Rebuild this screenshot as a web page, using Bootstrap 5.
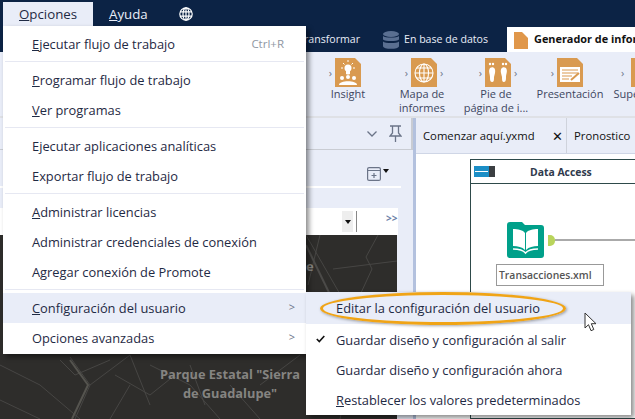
<!DOCTYPE html>
<html lang="es">
<head>
  <meta charset="UTF-8">
  <meta name="viewport" content="width=device-width, initial-scale=1.0">
  <title>Opciones - Configuración del usuario</title>
  <link href="https://cdn.jsdelivr.net/npm/bootstrap@5.3.0/dist/css/bootstrap.min.css" rel="stylesheet">
  <style>
    html, body { margin: 0; height: 100%; }
    body {
      width: 635px; height: 419px; overflow: hidden; position: relative;
      font-family: "Open Sans", "Liberation Sans", sans-serif;
      font-size: 13px; color: #1f2a44; background: #e9edf8;
    }
    .top-bar { height: 26px; background: #0c2345; padding: 2px 0 0 3px; color: #e9edf8; }
    .top-tab { width: 90px; padding-left: 16px; line-height: 24px; font-size: 13.3px; }
    .top-tab.on { background: #e9edf8; color: #1f2a44; }
    .top-tab.help { width: 86px; }
    .tab-bar { height: 26px; background: #0c2345; color: #e9edf8; font-size: 10.6px; }
    .tab-item { gap: 5px; padding-top: 2px; }
    .tab-first { width: 360px; justify-content: flex-end; }
    .tab-db { margin-left: 23px; width: 124px; }
    .tab-active { background: #fff; color: #111; font-size: 10.9px; font-weight: 700; flex: 1; margin-top: 1px; padding-left: 7px; gap: 6px; white-space: nowrap; overflow: hidden; }
    .tab-active svg { flex: none; }
    .ribbon { height: 66px; padding-left: 311px; border-bottom: 2px solid #dfe1e6; background: #e9edf8; overflow: hidden; }
    .rb-item { width: 74px; flex: none; text-align: center; font-size: 11px; line-height: 14px; color: #3d4660; padding-top: 6px; }
    .rb-item.last { margin-left: 6px; white-space: nowrap; }
    .rb-icon { height: 29px; gap: 3px; color: #6b7488; font-size: 11px; }
    .rb-icon.wide { padding-left: 4px; }
    .ghost { visibility: hidden; }
    .work { height: 301px; }
    .side { width: 413px; flex: none; border-right: 0; }
    .side-head { height: 32px; padding-right: 9px; gap: 12px; border-right: 2px solid #c9ccd3; border-bottom: 1px solid #c9ccd3; }
    .side-tools { height: 38px; padding: 0 12px 5px 0; margin-right: 12px; border-bottom: 2px solid #fff; gap: 2px; }
    .side-box { margin-top: 20px; margin-right: 15px; background: #fff; height: 27px; }
    .side-box-inner { padding-left: 342px; gap: 3px; height: 27px; }
    .caret-box { width: 11px; height: 21px; background: #eee; }
    .caret-dn { width: 0; height: 0; border: 3px solid transparent; border-top: 4px solid #111; border-bottom: 0; }
    .v-line { width: 1px; height: 21px; background: #888; }
    .chev { margin-left: 26px; color: #6b7fa8; font-size: 10px; font-weight: 700; line-height: 1; margin-top: -8px; }
    .map-area { height: 184px; margin-right: 16px; background: #2e2d2b; overflow: hidden; position: relative; }
    .map-lines { display: block; }
    .map-label {
      position: absolute; left: 140px; top: 130px; width: 180px; text-align: center;
      color: #858481; font-size: 12.8px; font-weight: 700; line-height: 19px;
    }
    .map-frag { position: absolute; left: 306px; top: 22px; color: #858481; font-size: 13px; font-weight: 700; }
    .split { width: 3px; background: #b3c1de; flex: none; }
    .canvas { min-width: 0; overflow: hidden; background: #fff; }
    .doc-tabs { height: 36px; border-bottom: 1px solid #cfd6e6; background: #e9edf8; font-size: 11.3px; color: #111; white-space: nowrap; }
    .doc-tab { width: 151px; flex: none; padding: 2px 0 0 7px; border-right: 1px solid #cfd3dc; height: 100%; }
    .doc-next { padding: 2px 0 0 7px; }
    .x-mark { font-size: 13px; line-height: 1; margin-right: 3px; }
    .group-box { margin: 5px 0 0 54px; width: 200px; border: 1px solid #2e4a4a; border-right: 0; height: 260px; }
    .group-head { height: 24px; border-bottom: 1px solid #2e4a4a; font-size: 10.4px; font-weight: 700; color: #2f3a4c; padding: 0 0 0 3px; }
    .group-title { padding-top: 3px; }
    .group-tag { width: 21px; height: 11px; background: #1b8ec6; border-right: 6px solid #3b3f42; margin-right: 35px; position: relative; }
    .group-tag::after { content: ""; position: absolute; left: 1px; right: 1px; top: 5px; height: 1px; background: #fff; }
    .tool-row { margin: 38px 0 0 36px; }
    .anchor { width: 7px; height: 11px; background: #b9d45c; border-radius: 0 5px 5px 0; margin-left: 4px; }
    .wire { flex: 1; height: 2px; background: #aaa; }
    .tool-label { margin: 6px 0 0 25px; width: 108px; height: 22px; border: 1px solid #999; padding-left: 2px; font-size: 10.4px; font-weight: 600; color: #555; line-height: 20px; }

    .menu-main, .menu-sub {
      border: 0; border-radius: 0; padding: 0; margin: 0; font-size: 12.85px; color: #1f2a44;
      box-shadow: 3px 3px 5px rgba(0,0,0,.45);
    }
    .menu-main { left: 3px; top: 26px; width: 303px; padding: 3px 0 1px; z-index: 5; }
    .menu-sub { left: 306px; top: 292px; width: 325px; z-index: 6; padding-bottom: 0; }
    .menu-main .dropdown-item, .menu-sub .dropdown-item {
      height: 30px; padding: 0 11px 0 29px; color: #1f2a44; line-height: 30px;
      display: flex; justify-content: space-between; align-items: center;
    }
    .menu-sub .dropdown-item { position: relative; padding-left: 30px; }
    .menu-main .dropdown-item.on, .menu-sub .dropdown-item.on { background: #e9edf8; }
    .menu-sub .dropdown-item.on { height: 32px; margin-bottom: 1px; }
    .menu-main .dropdown-divider { margin: 2px 2px 3px; border-top: 1px solid #e6e8f2; opacity: 1; }
    .keys { color: #9097a3; font-size: 11.5px; margin-right: 11px; }
    .more { color: #6b7488; font-size: 11px; margin-top: -2px; }
    .tick { position: absolute; left: 10px; top: 10px; }
    .oval {
      position: absolute; left: 320px; top: 292px; width: 246px; height: 33px;
      border: 3px solid #f0a416; border-radius: 50%; z-index: 7;
      box-shadow: 1px 1px 3px rgba(0,0,0,.35); pointer-events: none;
    }
    .pointer { position: absolute; left: 584px; top: 312px; z-index: 8; }
  </style>
</head>
<body>
  <div class="top-bar d-flex">
    <div class="top-tab on"><u>O</u>pciones</div>
    <div class="top-tab help"><u>A</u>yuda</div>
    <div class="d-flex align-items-center">
      <svg width="14" height="14" viewBox="0 0 14 14" fill="none" stroke="#fff" stroke-width="1.2"><circle cx="7" cy="7" r="6.2"/><ellipse cx="7" cy="7" rx="3" ry="6.2"/><path d="M1 4.8h12M1 9.2h12M7 .8v12.4"/></svg>
    </div>
  </div>

  <div class="tab-bar d-flex">
    <div class="tab-first tab-item d-flex align-items-center">Transformar</div>
    <div class="tab-db tab-item d-flex align-items-center">
      <svg width="16" height="18" viewBox="0 0 16 18" fill="#5a6f91"><ellipse cx="8" cy="3" rx="8" ry="3"/><path d="M0 5c2 2 14 2 16 0v3.500c-2 2-14 2-16 0zM0 10.500c2 2 14 2 16 0V15c0 3.800-16 3.800-16 0z"/></svg>
      <span>En base de datos</span>
    </div>
    <div class="tab-active d-flex align-items-center">
      <svg width="14" height="18" viewBox="0 0 14 18" fill="#e0974a"><path d="M0 1h8l6 6v11H0z"/></svg>
      <span>Generador de informes</span>
    </div>
  </div>

  <div class="ribbon d-flex">
    <div class="rb-item">
      <div class="rb-icon d-flex justify-content-center align-items-center"><span>›</span>
        <svg width="26" height="29" viewBox="0 0 26 29"><path d="M0 0h20l6 6v23H0z" fill="#d99a50"/><circle cx="13" cy="10" r="3.500" fill="#fff"/><path d="M11.500 13h3v3h-3zM13 2v2M6 10h2M18 10h2M8 5l1.500 1.500M18 5l-1.500 1.500" stroke="#fff" fill="#fff"/><circle cx="13" cy="19" r="2" fill="#fff"/><circle cx="7" cy="20" r="2" fill="#fff"/><circle cx="19" cy="20" r="2" fill="#fff"/><path d="M4 27c0-5 18-5 18 0z" fill="#fff"/></svg>
        <span class="ghost">›</span>
      </div>
      Insight
    </div>
    <div class="rb-item">
      <div class="rb-icon wide d-flex justify-content-center align-items-center"><span>›</span>
        <svg width="26" height="29" viewBox="0 0 26 29"><path d="M0 0h20l6 6v23H0z" fill="#d99a50"/><g fill="none" stroke="#fff" stroke-width="1.100"><circle cx="13" cy="15" r="9"/><ellipse cx="13" cy="15" rx="4.500" ry="9"/><path d="M4 15h18M5.500 10h15M5.500 20h15M13 6v18"/></g></svg>
        <span>›</span>
      </div>
      Mapa de<br>informes
    </div>
    <div class="rb-item">
      <div class="rb-icon wide d-flex justify-content-center align-items-center"><span>›</span>
        <svg width="26" height="29" viewBox="0 0 26 29"><path d="M0 0h20l6 6v23H0z" fill="#d99a50"/><g fill="#fff"><path d="M5 10c3-2 6 0 5 5l-1 4c0 3 0 5-2 5s-2-3-2-5c0-3-2-6 0-9zM21 10c-3-2-6 0-5 5l1 4c0 3 0 5 2 5s2-3 2-5c0-3 2-6 0-9z"/><circle cx="5" cy="6" r="1.200"/><circle cx="8" cy="6" r="1.200"/><circle cx="18" cy="6" r="1.200"/><circle cx="21" cy="6" r="1.200"/></g></svg>
        <span>›</span>
      </div>
      Pie de<br>página de i...
    </div>
    <div class="rb-item">
      <div class="rb-icon d-flex justify-content-center align-items-center"><span>›</span>
        <svg width="26" height="29" viewBox="0 0 26 29"><path d="M0 0h20l6 6v23H0z" fill="#d99a50"/><path d="M3 9h20v15H3z" fill="#fff"/><path d="M5 12h16M5 15h16M5 18h10M5 21h7" stroke="#d99a50" stroke-width="1.200"/><path d="M14 22l8-7" stroke="#d99a50" stroke-width="2"/></svg>
        <span class="ghost">›</span>
      </div>
      Presentación
    </div>
    <div class="rb-item last">
      <div class="rb-icon d-flex align-items-center ps-2"><span>›</span>
        <svg class="ms-1" width="26" height="29" viewBox="0 0 26 29"><path d="M0 0h20l6 6v23H0z" fill="#d99a50"/></svg>
      </div>
      Superposición
    </div>
  </div>

  <div class="work d-flex">
    <div class="side">
      <div class="side-head d-flex justify-content-end align-items-center">
        <svg width="10" height="6" viewBox="0 0 10 6" fill="none" stroke="#6b7488" stroke-width="1.300"><path d="M.5.500 5 5 9.500.500"/></svg>
        <svg width="13" height="17" viewBox="0 0 13 17" fill="none" stroke="#6b7488" stroke-width="1.300"><path d="M1 1h11M3.500 1v7L1 11h11L9.500 8V1M6.500 11v6"/></svg>
      </div>
      <div class="side-tools d-flex justify-content-end align-items-end">
        <svg width="14" height="14" viewBox="0 0 14 14" fill="none" stroke="#6b7488" stroke-width="1.200"><rect x=".6" y=".6" width="12.800" height="12.800" rx="1.500"/><path d="M.6 3.500h12.800M7 6v5M4.500 8.500h5"/></svg>
        <span class="caret-dn mb-2"></span>
      </div>
      <div class="side-box">
        <div class="side-box-inner d-flex align-items-center">
          <span class="caret-box d-flex align-items-center justify-content-center"><span class="caret-dn"></span></span>
          <span class="v-line"></span>
          <span class="chev">&gt;&gt;</span>
        </div>
      </div>
      <div class="map-area">
        <svg class="map-lines" width="397" height="184" viewBox="0 0 397 184" fill="none" stroke="#474644" stroke-width="1">
          <path d="M306 0 352 80M320 0 308 50M333 34 397 26M378 0 366 22 372 34 360 60M368 60 397 58M330 90 380 82 397 100M352 140 397 150M340 184 350 140" />
          <path d="M306 10 335 70" stroke="#4b4a48" stroke-width="2"/>
          <path d="M0 130 40 150 80 184M70 122 90 150 75 184M90 150 130 120 150 170M150 130 190 150 220 184M230 150 260 184M300 120 260 150M0 165 40 184M110 184 130 150M190 130 205 170M60 125 75 140 110 125M115 140 150 160 175 140" />
          <path d="M70 125 88 150 72 184" stroke="#55544f" stroke-width="2"/>
        </svg>
        <div class="map-frag">e</div>
        <div class="map-label">Parque Estatal "Sierra<br>de Guadalupe"</div>
      </div>
    </div>
    <div class="split"></div>
    <div class="canvas flex-grow-1">
      <div class="doc-tabs d-flex">
        <div class="doc-tab d-flex align-items-center justify-content-between"><span>Comenzar aquí.yxmd</span><span class="x-mark">✕</span></div>
        <div class="doc-next d-flex align-items-center">Pronostico</div>
      </div>
      <div class="group-box">
        <div class="group-head d-flex align-items-center"><span class="group-tag"></span><span class="group-title">Data Access</span></div>
        <div class="tool-row d-flex align-items-center">
          <svg width="37" height="36" viewBox="0 0 37 36"><path d="M3 0h12l3 3h16a3 3 0 0 1 3 3v27a3 3 0 0 1-3 3H3a3 3 0 0 1-3-3V3a3 3 0 0 1 3-3z" fill="#00a08a"/><g fill="#fff"><path d="M6 7c5 0 10 1 12 4v17C15 25 11 24 6 24zM31 7c-5 0-10 1-12 4v17c3-3 7-4 12-4z"/></g><path d="M6 27c5 0 10 1 12.500 4 2.500-3 7.500-4 12.500-4" fill="none" stroke="#fff" stroke-width="1.500"/></svg>
          <span class="anchor"></span>
          <span class="wire"></span>
        </div>
        <div class="tool-label">Transacciones.xml</div>
      </div>
    </div>
  </div>

  <div class="dropdown-menu show menu-main">
    <a class="dropdown-item" href="#"><span><u>E</u>jecutar flujo de trabajo</span><span class="keys">Ctrl+R</span></a>
    <hr class="dropdown-divider">
    <a class="dropdown-item" href="#"><span><u>P</u>rogramar flujo de trabajo</span></a>
    <a class="dropdown-item" href="#"><span><u>V</u>er programas</span></a>
    <hr class="dropdown-divider">
    <a class="dropdown-item" href="#"><span>Ejecutar aplicaciones analíticas</span></a>
    <a class="dropdown-item" href="#"><span>Exportar flujo de trabajo</span></a>
    <hr class="dropdown-divider">
    <a class="dropdown-item" href="#"><span><u>A</u>dministrar licencias</span></a>
    <a class="dropdown-item" href="#"><span>Administrar credenciales de conexión</span></a>
    <a class="dropdown-item" href="#"><span>Agregar conexión de Promote</span></a>
    <hr class="dropdown-divider">
    <a class="dropdown-item on" href="#"><span><u>C</u>onfiguración del usuario</span><span class="more">&gt;</span></a>
    <a class="dropdown-item" href="#"><span>Opciones avanzadas</span><span class="more">&gt;</span></a>
  </div>

  <div class="dropdown-menu show menu-sub">
    <a class="dropdown-item on" href="#"><span>Editar la configuración del usuario</span></a>
    <a class="dropdown-item" href="#">
      <svg class="tick" width="9" height="8" viewBox="0 0 9 8" fill="none" stroke="#111" stroke-width="1.600"><path d="M.8 4 3.300 6.500 8.300 1"/></svg>
      <span>Guardar diseño y configuración al salir</span></a>
    <a class="dropdown-item" href="#"><span>Guardar diseño y configuración ahora</span></a>
    <a class="dropdown-item" href="#"><span><u>R</u>establecer los valores predeterminados</span></a>
  </div>

  <div class="oval"></div>
  <svg class="pointer" width="14" height="20" viewBox="0 0 14 20"><path d="M1 1v15l3.500-3.300 2.500 6 2.800-1.200-2.500-5.800h4.700z" fill="#fff" stroke="#333" stroke-width="1"/></svg>
</body>
</html>
